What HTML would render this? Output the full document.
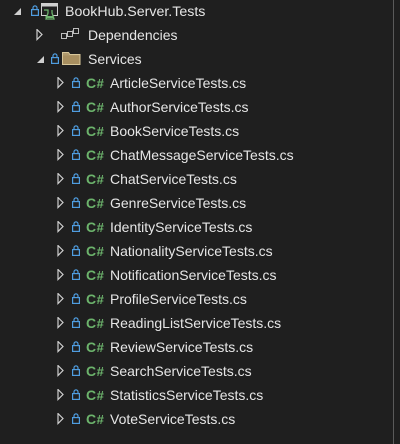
<!DOCTYPE html><html><head><style>
body{margin:0;width:400px;height:444px;background:#1f1f1f;position:relative;overflow:hidden;font-family:"Liberation Sans",sans-serif;color:#e6e6e6;font-size:14px}
.r{position:absolute;height:24px;left:0;width:392px}
.t{position:absolute;top:3px;line-height:18px;white-space:nowrap}
.vl{position:absolute;left:393px;top:0;width:1px;height:444px;background:#5a5a5a}
svg{position:absolute}
.cs{position:absolute;top:3px;color:#6cb36c;font-size:14px;line-height:18px;font-weight:bold;letter-spacing:0.5px;white-space:nowrap}
.cs b{font-size:13px}
</style></head><body>
<div class="vl"></div>
<svg width="0" height="0"><defs>
<g id="lock"><rect x="0.6" y="4.6" width="6.8" height="5.8" fill="none" stroke="#4f9de0" stroke-width="1.2"/><path d="M2 4.6V2.9a2 2 0 0 1 4 0V4.6" fill="none" stroke="#4f9de0" stroke-width="1.2"/></g>
<g id="arr"><path d="M1 0.5L6 5.5L1 10.5Z" fill="none" stroke="#cfcfcf" stroke-width="1.2"/></g>
<g id="dn"><path d="M7 0L7 7L0 7Z" fill="#cfcfcf"/></g>
</defs></svg>

<div class="r" style="top:0">
<svg style="left:14px;top:8px" width="8" height="8"><use href="#dn"/></svg>
<svg style="left:31px;top:5px" width="9" height="12"><use href="#lock"/></svg>
<svg style="left:41px;top:3px" width="18" height="18"><rect x="0.5" y="0.5" width="16" height="12" fill="none" stroke="#cfcfcf"/><rect x="1" y="1" width="15" height="2.5" fill="#cfcfcf"/><path d="M3 7h4v3l-2 6h8l-2-6V7" fill="#1f1f1f" stroke="#6cb36c" stroke-width="1.3"/><path d="M4.5 14h8" stroke="#6cb36c" stroke-width="2"/></svg>
<span class="t" style="left:65px;font-size:14.2px">BookHub.Server.Tests</span></div>

<div class="r" style="top:23px">
<svg style="left:36px;top:6px" width="8" height="12"><use href="#arr"/></svg>
<svg style="left:61px;top:3px" width="19" height="16"><rect x="0.5" y="7.5" width="5" height="5" fill="none" stroke="#bdbdbd"/><rect x="6.5" y="5.5" width="5" height="5" fill="none" stroke="#bdbdbd"/><rect x="12.5" y="2.5" width="5" height="5" fill="none" stroke="#bdbdbd"/><path d="M5 8h2M11 5h2" stroke="#bdbdbd"/></svg>
<span class="t" style="left:88px">Dependencies</span></div>

<div class="r" style="top:47px">
<svg style="left:37px;top:9px" width="8" height="8"><use href="#dn"/></svg>
<svg style="left:51px;top:6px" width="9" height="12"><use href="#lock"/></svg>
<svg style="left:62px;top:4px" width="19" height="15"><path d="M0.5 1.5h6l1.5 2h10v10h-17.5z" fill="#b09a6e" stroke="#d8c79a"/><rect x="1" y="4.5" width="16.5" height="8.5" fill="#a88f60"/></svg>
<span class="t" style="left:88px">Services</span></div>

<div id="files"></div>
<script>
var n=["ArticleServiceTests.cs","AuthorServiceTests.cs","BookServiceTests.cs","ChatMessageServiceTests.cs","ChatServiceTests.cs","GenreServiceTests.cs","IdentityServiceTests.cs","NationalityServiceTests.cs","NotificationServiceTests.cs","ProfileServiceTests.cs","ReadingListServiceTests.cs","ReviewServiceTests.cs","SearchServiceTests.cs","StatisticsServiceTests.cs","VoteServiceTests.cs"];
var h="";n.forEach(function(s,i){var y=71+i*24;
h+='<div class="r" style="top:'+y+'px"><svg style="left:57px;top:6px" width="8" height="12"><use href="#arr"/></svg><svg style="left:72px;top:6px" width="9" height="12"><use href="#lock"/></svg><span class="cs" style="left:86px">C<b>#</b></span><span class="t" style="left:110px">'+s+'</span></div>';});
document.getElementById("files").innerHTML=h;
</script>
</body></html>
